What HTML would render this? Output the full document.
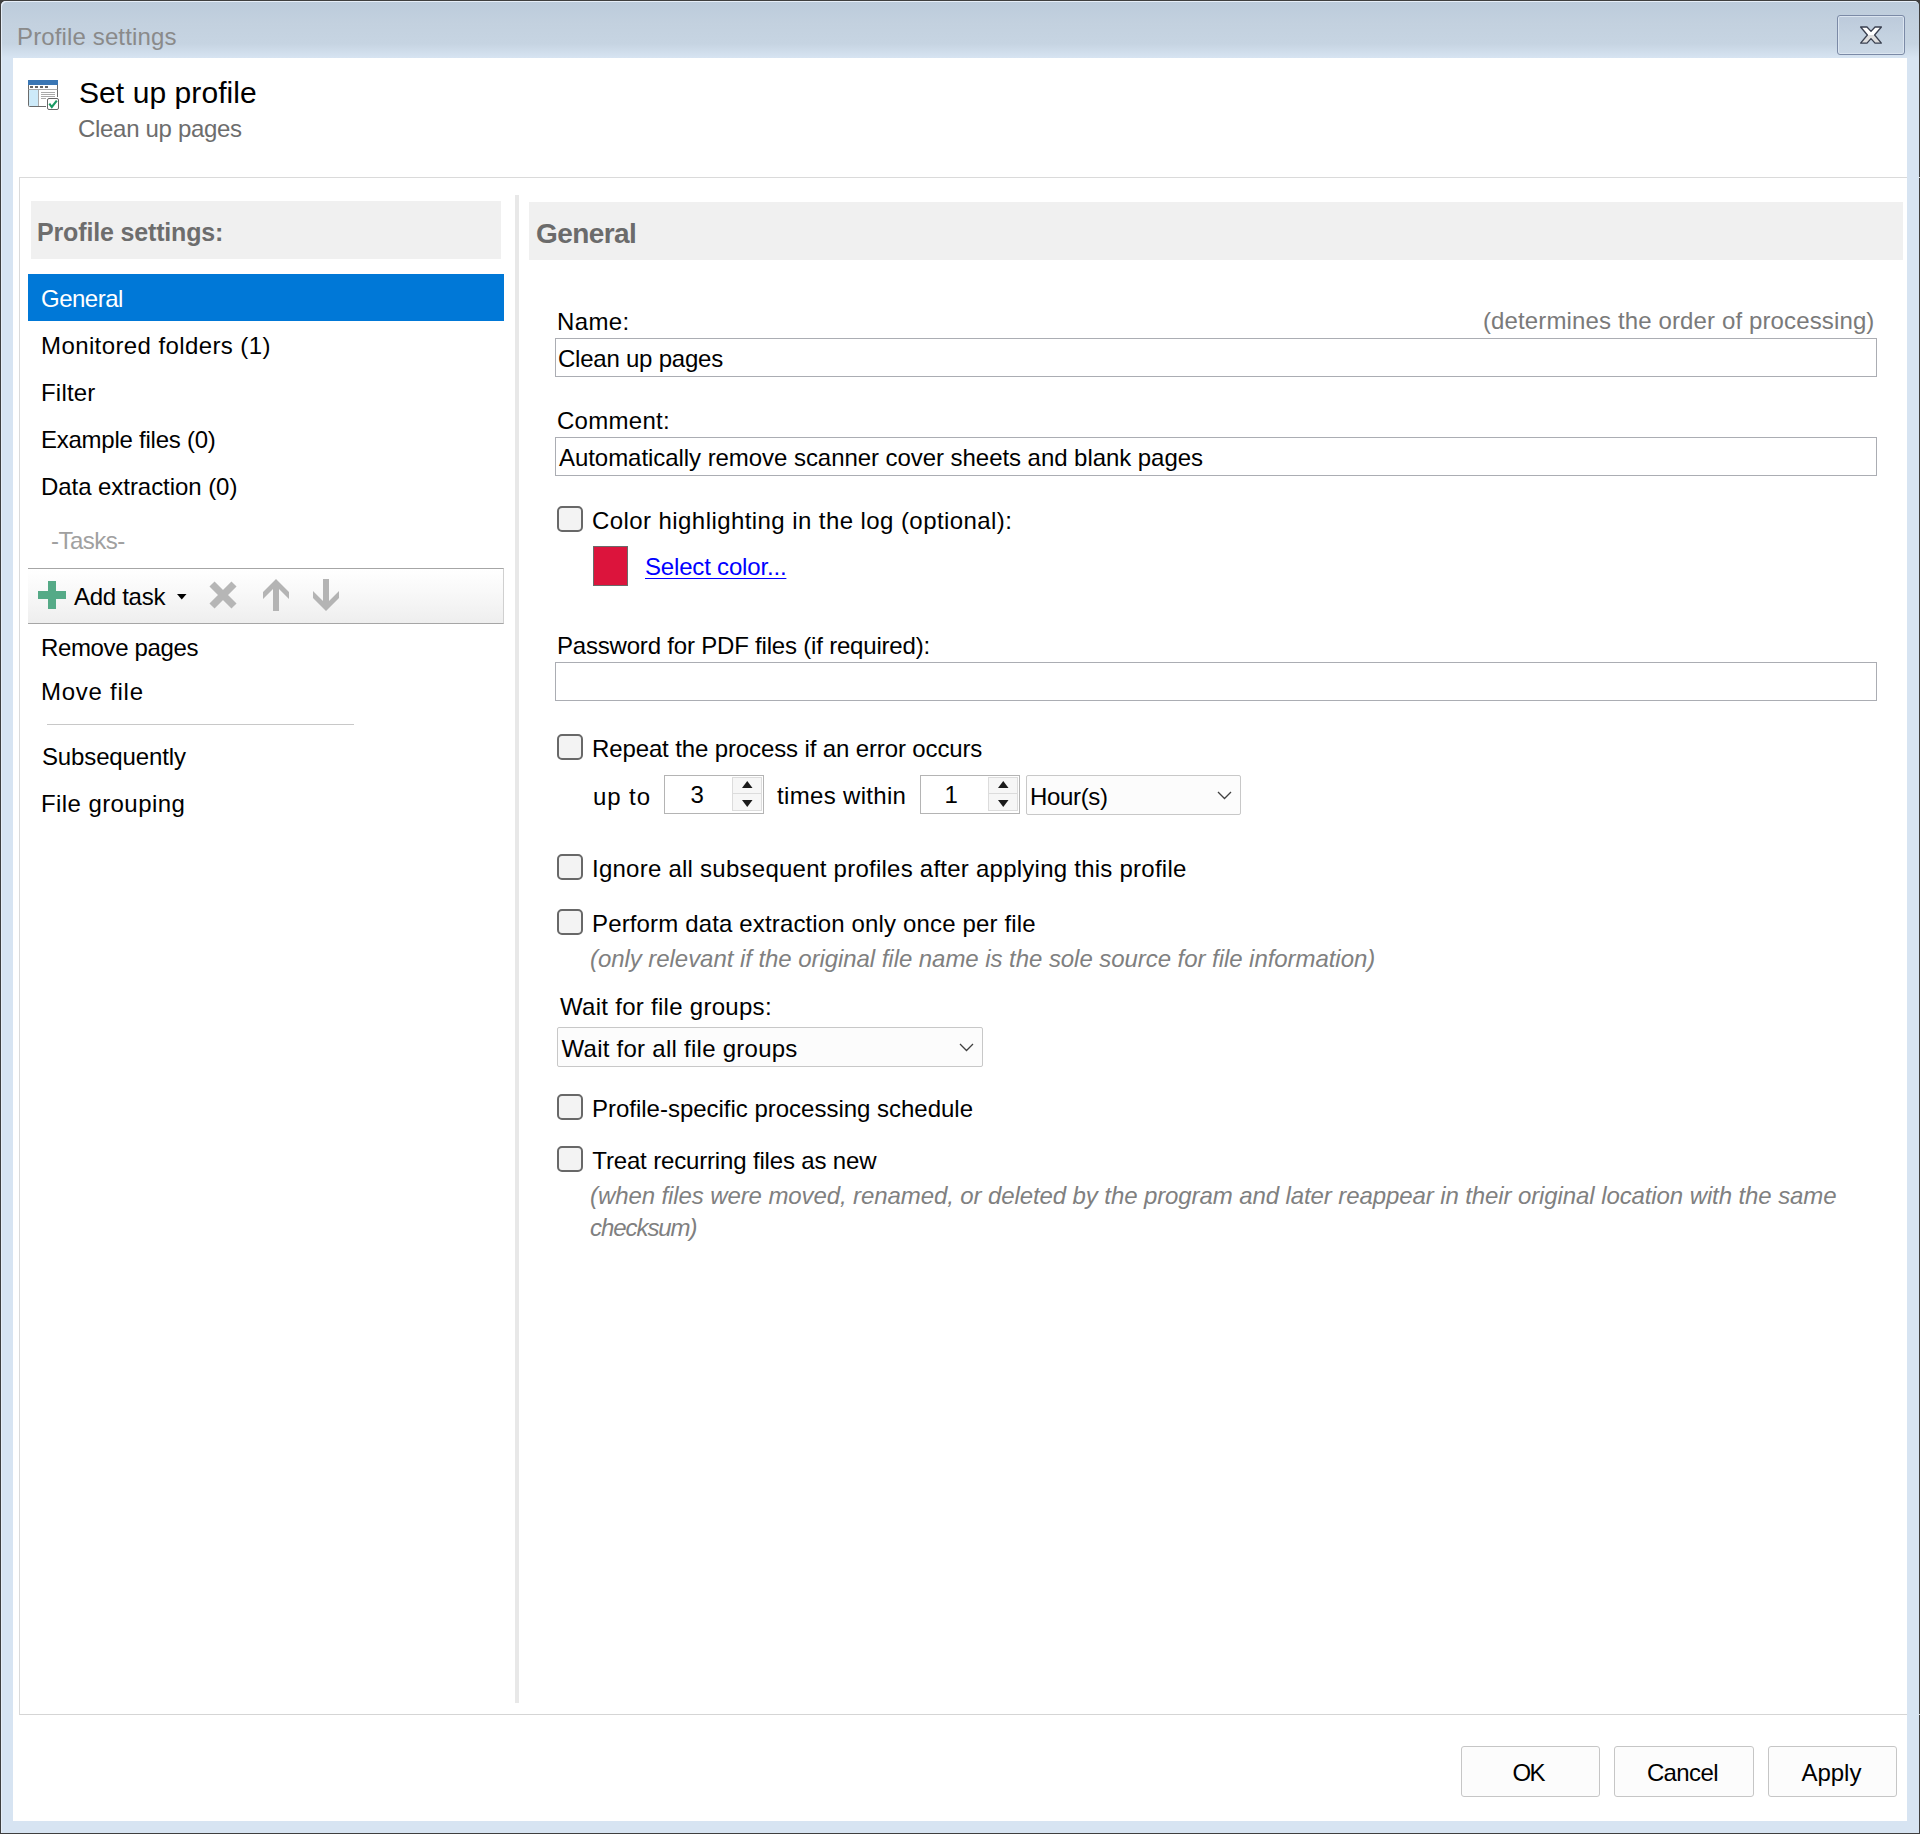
<!DOCTYPE html>
<html><head><meta charset="utf-8"><title>Profile settings</title>
<style>
html,body{margin:0;padding:0;}
body{width:1920px;height:1834px;position:relative;overflow:hidden;font-family:"Liberation Sans", sans-serif;background:#3f3f3f;}
</style></head><body>
<div style="position:absolute;left:1px;top:1px;width:1918px;height:1832px;background:#d7e4f2;border-radius:5px 5px 0 0;"></div>
<div style="position:absolute;left:1px;top:1px;width:1918px;height:57px;background:linear-gradient(#bccbdb 0%,#c3d1df 40%,#c6d4e2 75%,#d7e4f2 100%);border-radius:5px 5px 0 0;box-shadow:inset 1px 1px 0 #e6eef8;"></div>
<div style="position:absolute;left:1px;top:58px;width:1px;height:1775px;background:#e6eef8;"></div>
<div style="position:absolute;left:13px;top:58px;width:1894px;height:1763px;background:#ffffff;"></div>
<div style="position:absolute;left:17.00px;top:25px;font-size:24px;line-height:24px;color:#8a8a8a;white-space:nowrap;letter-spacing:0.133px;">Profile settings</div>
<div style="position:absolute;left:1837px;top:15px;width:66px;height:38px;border:1px solid #7b8aa6;border-radius:3px;background:linear-gradient(#bccadb,#c5d3e1 60%,#cbd8e6);box-shadow:inset 0 0 0 1px #dbe5f0;"></div>
<svg style="position:absolute;left:1855px;top:22px" width="32" height="26" viewBox="0 0 32 26">
<defs><linearGradient id="xg" x1="0" y1="0" x2="0" y2="26" gradientUnits="userSpaceOnUse"><stop offset="0.5" stop-color="#ffffff"/><stop offset="0.5" stop-color="#dedede"/></linearGradient></defs>
<path d="M5.6,5 L12,5 L16,9.4 L20,5 L26.4,5 L19.6,13 L26.4,21.1 L20,21.1 L16,16.6 L12,21.1 L5.6,21.1 L12.4,13 Z" fill="url(#xg)" stroke="#3a4050" stroke-width="1.3" stroke-linejoin="round"/></svg>
<svg style="position:absolute;left:27px;top:79px" width="34" height="33" viewBox="0 0 34 33">
<rect x="1.5" y="1.5" width="29" height="26" rx="1" fill="#fff" stroke="#6b6b6b" stroke-width="1"/>
<rect x="1" y="1" width="30" height="5" fill="#3a76b4"/>
<rect x="2" y="11" width="9.5" height="16" fill="#cdeaf9"/>
<line x1="1.5" y1="10.5" x2="30.5" y2="10.5" stroke="#a8a8a8" stroke-width="1"/>
<line x1="11.5" y1="10.5" x2="11.5" y2="27" stroke="#a8a8a8" stroke-width="1"/>
<rect x="3" y="7" width="3" height="2" fill="#666"/><rect x="8" y="7" width="3" height="2" fill="#666"/><rect x="13" y="7" width="3" height="2" fill="#666"/><rect x="18" y="7" width="3" height="2" fill="#666"/>
<line x1="14" y1="13.5" x2="28" y2="13.5" stroke="#aaa"/><line x1="14" y1="15.5" x2="28" y2="15.5" stroke="#aaa"/><line x1="14" y1="17.5" x2="28" y2="17.5" stroke="#aaa"/><line x1="14" y1="19.5" x2="19" y2="19.5" stroke="#aaa"/>
<rect x="19" y="18" width="15" height="15" fill="#fff"/>
<rect x="20.5" y="19.5" width="11" height="11" rx="1.5" fill="#fff" stroke="#666" stroke-width="1"/>
<path d="M22.3,24.6 L24.8,28 L29.8,21.6" fill="none" stroke="#1a9a64" stroke-width="2.1"/>
</svg>
<div style="position:absolute;left:79.00px;top:78px;font-size:30px;line-height:30px;color:#000;white-space:nowrap;letter-spacing:0.077px;">Set up profile</div>
<div style="position:absolute;left:78.00px;top:117px;font-size:24px;line-height:24px;color:#6d6d6d;white-space:nowrap;letter-spacing:-0.308px;">Clean up pages</div>
<div style="position:absolute;left:19px;top:177px;width:1900px;height:1536px;border-top:1px solid #dadada;border-left:1px solid #dadada;border-bottom:1px solid #d5d5d5;"></div>
<div style="position:absolute;left:1907px;top:58px;width:12px;height:1763px;background:#d7e4f2;"></div>
<div style="position:absolute;left:31px;top:201px;width:470px;height:58px;background:#f0f0f0;"></div>
<div style="position:absolute;left:37.00px;top:220px;font-size:25px;line-height:25px;color:#6d6d6d;white-space:nowrap;font-weight:bold;letter-spacing:-0.156px;">Profile settings:</div>
<div style="position:absolute;left:28px;top:274px;width:476px;height:47px;background:#0078d7;"></div>
<div style="position:absolute;left:41.00px;top:287px;font-size:24px;line-height:24px;color:#fff;white-space:nowrap;letter-spacing:-0.500px;">General</div>
<div style="position:absolute;left:41.00px;top:334px;font-size:24px;line-height:24px;color:#000;white-space:nowrap;letter-spacing:0.400px;">Monitored folders (1)</div>
<div style="position:absolute;left:41.00px;top:381px;font-size:24px;line-height:24px;color:#000;white-space:nowrap;letter-spacing:0.200px;">Filter</div>
<div style="position:absolute;left:41.00px;top:428px;font-size:24px;line-height:24px;color:#000;white-space:nowrap;letter-spacing:-0.250px;">Example files (0)</div>
<div style="position:absolute;left:41.00px;top:475px;font-size:24px;line-height:24px;color:#000;white-space:nowrap;letter-spacing:-0.056px;">Data extraction (0)</div>
<div style="position:absolute;left:51.00px;top:529px;font-size:24px;line-height:24px;color:#a0a0a0;white-space:nowrap;letter-spacing:-0.500px;">-Tasks-</div>
<div style="position:absolute;left:28px;top:568px;width:476px;height:56px;border-top:1px solid #a6a6a6;border-bottom:1px solid #a6a6a6;border-right:1px solid #d0d0d0;background:linear-gradient(#ffffff,#f9f9f9 40%,#eeeeee);box-sizing:border-box;"></div>
<svg style="position:absolute;left:38px;top:581px" width="28" height="28"><path d="M10,0 H18 V10 H28 V18 H18 V28 H10 V18 H0 V10 H10 Z" fill="#55aa87"/></svg>
<div style="position:absolute;left:74.00px;top:585px;font-size:24px;line-height:24px;color:#000;white-space:nowrap;letter-spacing:-0.286px;">Add task</div>
<svg style="position:absolute;left:177px;top:594px" width="10" height="6"><path d="M0,0 H9.5 L4.75,5.5 Z" fill="#000"/></svg>
<svg style="position:absolute;left:0;top:0;overflow:visible" width="1" height="1"><g fill="#b4b4b4"><path d="M212,584 L234,606 M234,584 L212,606" stroke="#b6b6b6" stroke-width="7.2" fill="none"/><path d="M276,579 L289,592 L289,599 L279,589 L279,611 L273,611 L273,589 L263,599 L263,592 Z"/><path d="M326,611 L339,598 L339,591 L329,601 L329,579 L323,579 L323,601 L313,591 L313,598 Z"/></g></svg>
<div style="position:absolute;left:41.00px;top:636px;font-size:24px;line-height:24px;color:#000;white-space:nowrap;letter-spacing:-0.364px;">Remove pages</div>
<div style="position:absolute;left:41.00px;top:680px;font-size:24px;line-height:24px;color:#000;white-space:nowrap;letter-spacing:0.750px;">Move file</div>
<div style="position:absolute;left:47px;top:724px;width:307px;height:1px;background:#c8c8c8;"></div>
<div style="position:absolute;left:42.00px;top:745px;font-size:24px;line-height:24px;color:#000;white-space:nowrap;letter-spacing:-0.136px;">Subsequently</div>
<div style="position:absolute;left:41.00px;top:792px;font-size:24px;line-height:24px;color:#000;white-space:nowrap;letter-spacing:0.417px;">File grouping</div>
<div style="position:absolute;left:515px;top:195px;width:4px;height:1508px;background:#e8e8e8;"></div>
<div style="position:absolute;left:529px;top:202px;width:1374px;height:58px;background:#f0f0f0;"></div>
<div style="position:absolute;left:536.00px;top:220px;font-size:28px;line-height:28px;color:#6b6b6b;white-space:nowrap;font-weight:bold;letter-spacing:-0.583px;">General</div>
<div style="position:absolute;left:557.00px;top:310px;font-size:24px;line-height:24px;color:#000;white-space:nowrap;letter-spacing:0.375px;">Name:</div>
<div style="position:absolute;left:1483.00px;top:309px;font-size:24px;line-height:24px;color:#7a7a7a;white-space:nowrap;letter-spacing:0.129px;">(determines the order of processing)</div>
<div style="position:absolute;left:555px;top:338px;width:1322px;height:39px;border:1px solid #abadb3;box-sizing:border-box;background:#fff;"></div>
<div style="position:absolute;left:558.00px;top:347px;font-size:24px;line-height:24px;color:#000;white-space:nowrap;letter-spacing:-0.231px;">Clean up pages</div>
<div style="position:absolute;left:557.00px;top:409px;font-size:24px;line-height:24px;color:#000;white-space:nowrap;letter-spacing:0.286px;">Comment:</div>
<div style="position:absolute;left:555px;top:437px;width:1322px;height:39px;border:1px solid #abadb3;box-sizing:border-box;background:#fff;"></div>
<div style="position:absolute;left:559.00px;top:446px;font-size:24px;line-height:24px;color:#000;white-space:nowrap;letter-spacing:-0.054px;">Automatically remove scanner cover sheets and blank pages</div>
<div style="position:absolute;left:557px;top:506px;width:26px;height:26px;border:2px solid #686868;border-radius:5px;background:#f3f3f3;box-sizing:border-box;"></div>
<div style="position:absolute;left:592.00px;top:509px;font-size:24px;line-height:24px;color:#000;white-space:nowrap;letter-spacing:0.425px;">Color highlighting in the log (optional):</div>
<div style="position:absolute;left:593px;top:546px;width:35px;height:40px;background:#dc143c;border:1px solid #6a6a6a;box-sizing:border-box;"></div>
<div style="position:absolute;left:645.00px;top:555px;font-size:24px;line-height:24px;color:#0000ff;white-space:nowrap;letter-spacing:-0.179px;text-decoration:underline;text-decoration-thickness:1px;text-underline-offset:3px;">Select color...</div>
<div style="position:absolute;left:557.00px;top:634px;font-size:24px;line-height:24px;color:#000;white-space:nowrap;letter-spacing:-0.194px;">Password for PDF files (if required):</div>
<div style="position:absolute;left:555px;top:662px;width:1322px;height:39px;border:1px solid #abadb3;box-sizing:border-box;background:#fff;"></div>
<div style="position:absolute;left:557px;top:734px;width:26px;height:26px;border:2px solid #686868;border-radius:5px;background:#f3f3f3;box-sizing:border-box;"></div>
<div style="position:absolute;left:592.00px;top:737px;font-size:24px;line-height:24px;color:#000;white-space:nowrap;letter-spacing:-0.125px;">Repeat the process if an error occurs</div>
<div style="position:absolute;left:593.00px;top:785px;font-size:24px;line-height:24px;color:#000;white-space:nowrap;letter-spacing:0.900px;">up to</div>
<div style="position:absolute;left:664px;top:775px;width:100px;height:39px;border:1px solid #b4b4b4;box-sizing:border-box;background:#fff;"></div>
<div style="position:absolute;left:732px;top:777px;width:30px;height:17px;border:1px solid #dcdcdc;box-sizing:border-box;background:#f6f6f6;"></div>
<div style="position:absolute;left:732px;top:793px;width:30px;height:18px;border:1px solid #dcdcdc;box-sizing:border-box;background:#f6f6f6;"></div>
<svg style="position:absolute;left:742px;top:781px" width="11" height="7"><path d="M0,7 H10.5 L5.25,0 Z" fill="#1a1a1a"/></svg>
<svg style="position:absolute;left:742px;top:800px" width="11" height="7"><path d="M0,0 H10.5 L5.25,7 Z" fill="#1a1a1a"/></svg>
<div style="position:absolute;left:690.40px;top:783px;font-size:24px;line-height:24px;color:#000;white-space:nowrap;">3</div>
<div style="position:absolute;left:777.00px;top:784px;font-size:24px;line-height:24px;color:#000;white-space:nowrap;letter-spacing:0.327px;">times within</div>
<div style="position:absolute;left:920px;top:775px;width:100px;height:39px;border:1px solid #b4b4b4;box-sizing:border-box;background:#fff;"></div>
<div style="position:absolute;left:988px;top:777px;width:30px;height:17px;border:1px solid #dcdcdc;box-sizing:border-box;background:#f6f6f6;"></div>
<div style="position:absolute;left:988px;top:793px;width:30px;height:18px;border:1px solid #dcdcdc;box-sizing:border-box;background:#f6f6f6;"></div>
<svg style="position:absolute;left:998px;top:781px" width="11" height="7"><path d="M0,7 H10.5 L5.25,0 Z" fill="#1a1a1a"/></svg>
<svg style="position:absolute;left:998px;top:800px" width="11" height="7"><path d="M0,0 H10.5 L5.25,7 Z" fill="#1a1a1a"/></svg>
<div style="position:absolute;left:944.60px;top:783px;font-size:24px;line-height:24px;color:#000;white-space:nowrap;">1</div>
<div style="position:absolute;left:1026px;top:775px;width:215px;height:40px;border:1px solid #c8c8c8;border-radius:2px;box-sizing:border-box;background:#fcfcfc;"></div>
<svg style="position:absolute;left:1217px;top:791px" width="15" height="9"><path d="M1,1 L7.5,7.5 L14,1" stroke="#404040" stroke-width="1.3" fill="none"/></svg>
<div style="position:absolute;left:1030.00px;top:785px;font-size:24px;line-height:24px;color:#000;white-space:nowrap;letter-spacing:-0.333px;">Hour(s)</div>
<div style="position:absolute;left:557px;top:854px;width:26px;height:26px;border:2px solid #686868;border-radius:5px;background:#f3f3f3;box-sizing:border-box;"></div>
<div style="position:absolute;left:592.00px;top:857px;font-size:24px;line-height:24px;color:#000;white-space:nowrap;letter-spacing:0.246px;">Ignore all subsequent profiles after applying this profile</div>
<div style="position:absolute;left:557px;top:909px;width:26px;height:26px;border:2px solid #686868;border-radius:5px;background:#f3f3f3;box-sizing:border-box;"></div>
<div style="position:absolute;left:592.00px;top:912px;font-size:24px;line-height:24px;color:#000;white-space:nowrap;letter-spacing:0.146px;">Perform data extraction only once per file</div>
<div style="position:absolute;left:590.00px;top:947px;font-size:24px;line-height:24px;color:#808080;white-space:nowrap;font-style:italic;letter-spacing:-0.056px;">(only relevant if the original file name is the sole source for file information)</div>
<div style="position:absolute;left:560.00px;top:995px;font-size:24px;line-height:24px;color:#000;white-space:nowrap;letter-spacing:0.285px;">Wait for file groups:</div>
<div style="position:absolute;left:557px;top:1027px;width:426px;height:40px;border:1px solid #c8c8c8;border-radius:2px;box-sizing:border-box;background:#fcfcfc;"></div>
<svg style="position:absolute;left:959px;top:1043px" width="15" height="9"><path d="M1,1 L7.5,7.5 L14,1" stroke="#404040" stroke-width="1.3" fill="none"/></svg>
<div style="position:absolute;left:561.50px;top:1037px;font-size:24px;line-height:24px;color:#000;white-space:nowrap;letter-spacing:0.261px;">Wait for all file groups</div>
<div style="position:absolute;left:557px;top:1094px;width:26px;height:26px;border:2px solid #686868;border-radius:5px;background:#f3f3f3;box-sizing:border-box;"></div>
<div style="position:absolute;left:592.00px;top:1097px;font-size:24px;line-height:24px;color:#000;white-space:nowrap;letter-spacing:-0.014px;">Profile-specific processing schedule</div>
<div style="position:absolute;left:557px;top:1146px;width:26px;height:26px;border:2px solid #686868;border-radius:5px;background:#f3f3f3;box-sizing:border-box;"></div>
<div style="position:absolute;left:592.30px;top:1149px;font-size:24px;line-height:24px;color:#000;white-space:nowrap;letter-spacing:-0.159px;">Treat recurring files as new</div>
<div style="position:absolute;left:590.00px;top:1184px;font-size:24px;line-height:24px;color:#808080;white-space:nowrap;font-style:italic;letter-spacing:-0.098px;">(when files were moved, renamed, or deleted by the program and later reappear in their original location with the same</div>
<div style="position:absolute;left:590.00px;top:1216px;font-size:24px;line-height:24px;color:#808080;white-space:nowrap;font-style:italic;letter-spacing:-1.062px;">checksum)</div>
<div style="position:absolute;left:1461px;top:1746px;width:139px;height:51px;border:1px solid #c6c6c6;border-radius:3px;box-sizing:border-box;background:#fcfcfc;"></div>
<div style="position:absolute;left:1512.40px;top:1761px;font-size:24px;line-height:24px;color:#000;white-space:nowrap;letter-spacing:-1.600px;">OK</div>
<div style="position:absolute;left:1614px;top:1746px;width:140px;height:51px;border:1px solid #c6c6c6;border-radius:3px;box-sizing:border-box;background:#fcfcfc;"></div>
<div style="position:absolute;left:1646.90px;top:1761px;font-size:24px;line-height:24px;color:#000;white-space:nowrap;letter-spacing:-0.600px;">Cancel</div>
<div style="position:absolute;left:1768px;top:1746px;width:129px;height:51px;border:1px solid #c6c6c6;border-radius:3px;box-sizing:border-box;background:#fcfcfc;"></div>
<div style="position:absolute;left:1801.40px;top:1761px;font-size:24px;line-height:24px;color:#000;white-space:nowrap;">Apply</div>
</body></html>
